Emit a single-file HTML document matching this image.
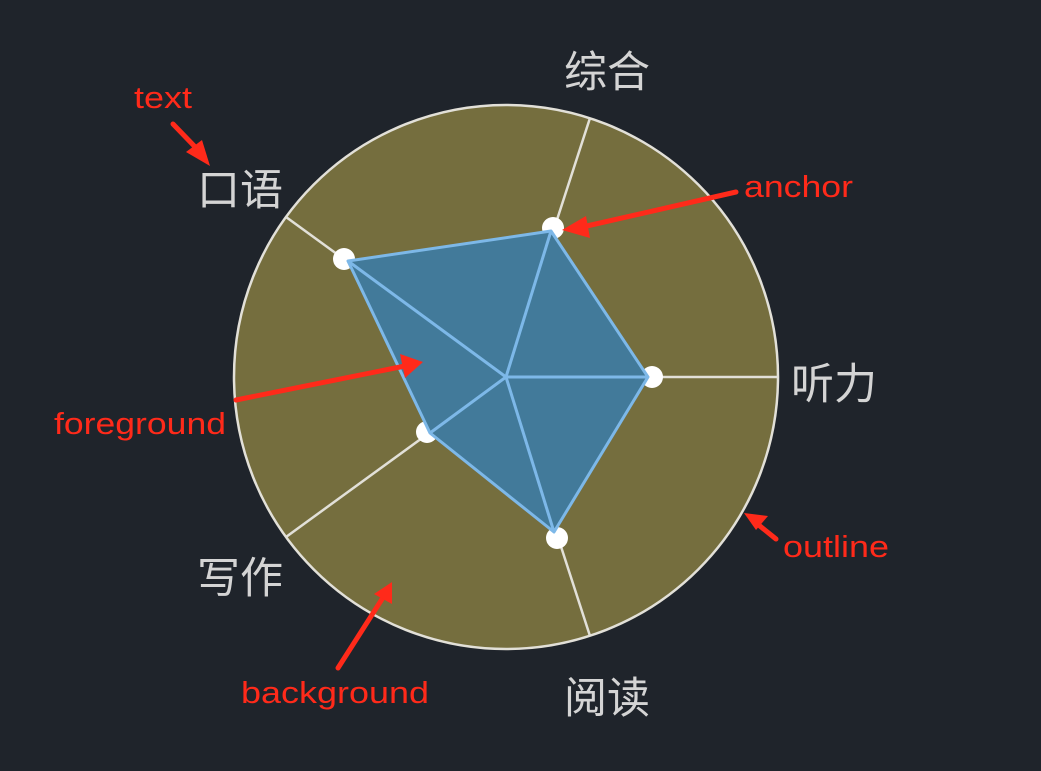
<!DOCTYPE html>
<html><head><meta charset="utf-8"><style>
html,body{margin:0;padding:0;background:#1f242b;}
svg{display:block}
</style></head><body>
<svg width="1041" height="771" viewBox="0 0 1041 771" xmlns="http://www.w3.org/2000/svg">
<rect width="1041" height="771" fill="#1f242b"/>
<circle cx="506" cy="377" r="272" fill="#756e3e" stroke="#e2e0d8" stroke-width="2.5"/>
<g stroke="#e2e0d8" stroke-width="2.5">
<line x1="506" y1="377" x2="778" y2="377"/>
<line x1="506" y1="377" x2="590" y2="118"/>
<line x1="506" y1="377" x2="286" y2="217"/>
<line x1="506" y1="377" x2="286" y2="537"/>
<line x1="506" y1="377" x2="590" y2="636"/>
</g>
<g fill="#fff">
<circle cx="553" cy="228" r="11"/>
<circle cx="652" cy="377" r="11"/>
<circle cx="557" cy="538" r="11"/>
<circle cx="427" cy="432" r="11"/>
<circle cx="344" cy="259" r="11"/>
</g>
<polygon points="551,231 648,377 554,532 430,433 348,261" fill="#427a9a" stroke="#7db8e8" stroke-width="3" stroke-linejoin="round"/>
<g stroke="#7db8e8" stroke-width="3">
<line x1="506" y1="377" x2="551" y2="231"/>
<line x1="506" y1="377" x2="648" y2="377"/>
<line x1="506" y1="377" x2="554" y2="532"/>
<line x1="506" y1="377" x2="430" y2="433"/>
<line x1="506" y1="377" x2="348" y2="261"/>
</g>
<g font-family="Liberation Sans, Noto Sans CJK SC, sans-serif" font-size="43" fill="#d4d4d4" text-anchor="middle">
<text x="607" y="87">综合</text>
<text x="240" y="205">口语</text>
<text x="834" y="399">听力</text>
<text x="240" y="593">写作</text>
<text x="607" y="713">阅读</text>
</g>
<g font-family="Liberation Sans, sans-serif" font-size="31" fill="#ff2a1a">
<text x="134" y="108" textLength="58" lengthAdjust="spacingAndGlyphs">text</text>
<text x="744" y="197" textLength="109" lengthAdjust="spacingAndGlyphs">anchor</text>
<text x="54" y="434" textLength="172" lengthAdjust="spacingAndGlyphs">foreground</text>
<text x="783" y="557" textLength="106" lengthAdjust="spacingAndGlyphs">outline</text>
<text x="241" y="703" textLength="188" lengthAdjust="spacingAndGlyphs">background</text>
</g>
<g stroke="#ff2a1a" stroke-width="5" fill="none" stroke-linecap="round">
<line x1="173" y1="124" x2="200" y2="152"/>
<line x1="736" y1="192" x2="578" y2="228"/>
<line x1="236" y1="400" x2="405" y2="366"/>
<line x1="776" y1="539" x2="755" y2="522"/>
<line x1="338" y1="668" x2="384" y2="596"/>
</g>
<g fill="#ff2a1a">
<polygon points="210,166 186,152 202,140"/>
<polygon points="562,230 586,216 590,238"/>
<polygon points="423,362 400,354 405,378"/>
<polygon points="744,513 768,516 756,530"/>
<polygon points="392,582 374,594 392,604"/>
</g>
</svg>
</body></html>
